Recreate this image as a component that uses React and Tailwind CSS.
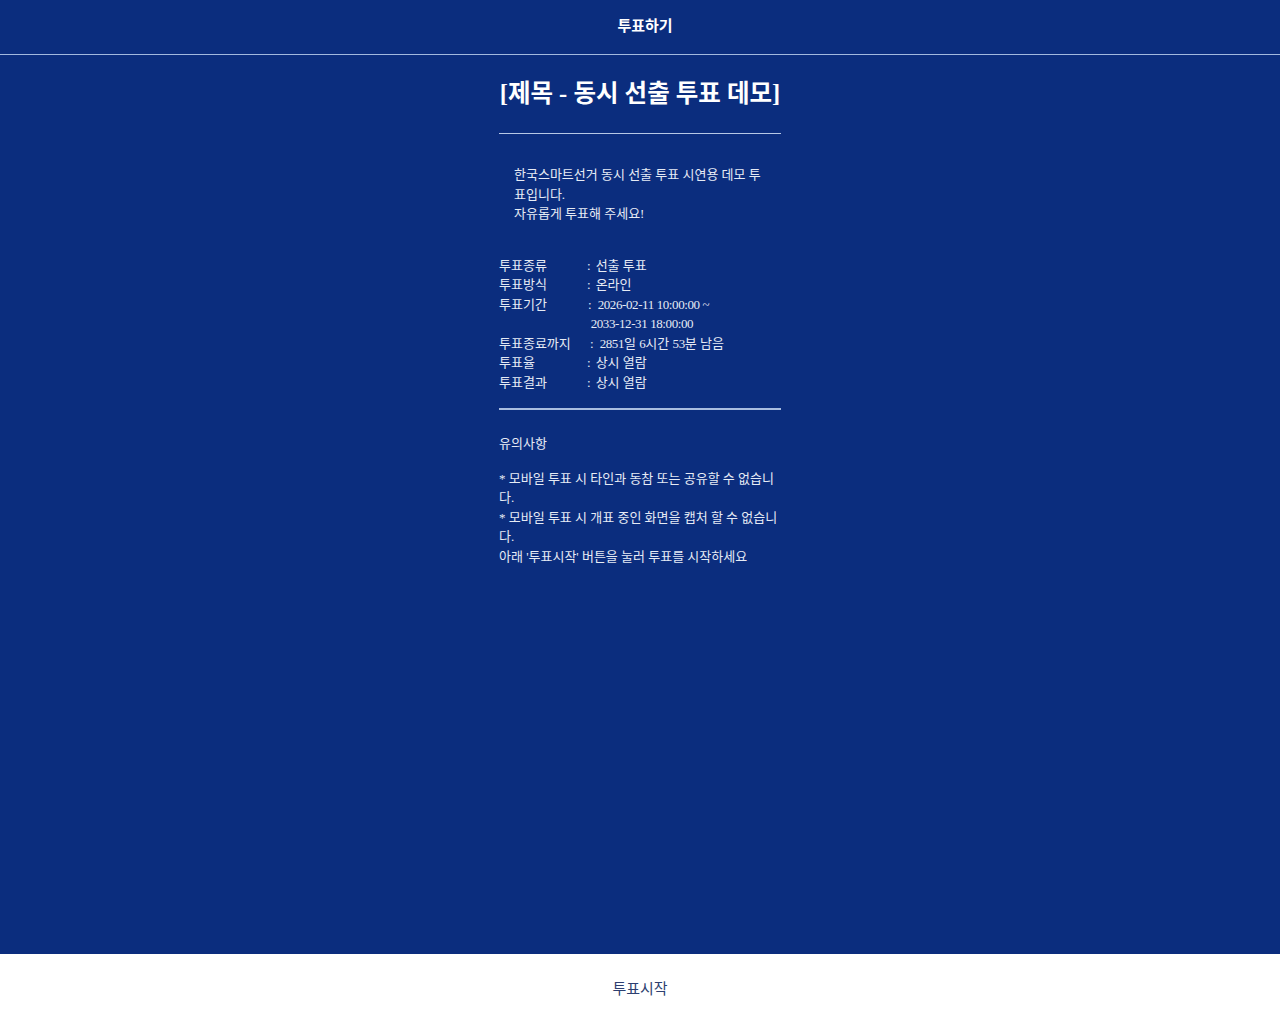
import React from "react";

const font = { fontFamily: '"Liberation Serif", "Noto Sans CJK KR", serif' };

const rows = [
  { label: "투표종류", value: "선출 투표" },
  { label: "투표방식", value: "온라인" },
];

const Row = ({ label, children, colonClass = "ml-0" }) => (
  <div className="flex">
    <span className="w-[88px] shrink-0">{label}</span>
    <span className={colonClass}>:</span>
    <span className="flex-1">{children}</span>
  </div>
);

export default function App() {
  return (
    <div
      className="flex flex-col h-screen w-full bg-[#0b2d7e] text-[#e6ebf5]"
      style={font}
    >
      {/* Header */}
      <div className="h-[55px] shrink-0 flex items-center justify-center border-b border-[#a3b9df]">
        <h1 className="text-[15px] font-bold text-white -mt-[2px] pl-[10px]">투표하기</h1>
      </div>

      {/* Content */}
      <div className="flex-1 overflow-y-auto">
        <div className="w-[282px] mx-auto text-[13px] leading-[19.5px]">
          <h2 className="mt-[21px] text-center text-[24.5px] leading-[36px] font-bold text-white whitespace-nowrap">
            [제목 - 동시 선출 투표 데모]
          </h2>
          <div className="mt-[21px] border-t border-[#b7c8e6]" />

          <div className="mt-[31px] px-[15px]">
            <p>한국스마트선거 동시 선출 투표 시연용 데모 투표입니다.</p>
            <p>자유롭게 투표해 주세요!</p>
          </div>

          <div className="mt-[32px]">
            {rows.map((r) => (
              <Row key={r.label} label={r.label}>
                <span className="ml-[5px]">{r.value}</span>
              </Row>
            ))}
            <Row label="투표기간" colonClass="ml-[1px]">
              <span className="ml-[6px] tracking-[-0.4px]">2026-02-11 10:00:00 ~</span>
              <div className="-ml-[1px] tracking-[-0.4px]">2033-12-31 18:00:00</div>
            </Row>
            <Row label="투표종료까지" colonClass="ml-[3px]">
              <span className="ml-[6px]">
                <span className="tracking-[-0.4px]">2851</span>일{" "}
                <span className="tracking-[-0.4px]">6</span>시간{" "}
                <span className="tracking-[-0.4px]">53</span>분 남음
              </span>
            </Row>
            <Row label="투표율">
              <span className="ml-[5px]">상시 열람</span>
            </Row>
            <Row label="투표결과">
              <span className="ml-[5px]">상시 열람</span>
            </Row>
          </div>

          <div className="mt-[16px] border-t-2 border-[#a9bde0]" />

          <p className="mt-[24px]">유의사항</p>
          <div className="mt-[15px]">
            <p>* 모바일 투표 시 타인과 동참 또는 공유할 수 없습니다.</p>
            <p>* 모바일 투표 시 개표 중인 화면을 캡처 할 수 없습니다.</p>
            <p>아래 '투표시작' 버튼을 눌러 투표를 시작하세요</p>
          </div>
        </div>
      </div>

      {/* Footer */}
      <button className="h-[70px] shrink-0 w-full bg-white text-[#2d3f70] text-[15px] flex items-center justify-center">
        투표시작
      </button>
    </div>
  );
}
